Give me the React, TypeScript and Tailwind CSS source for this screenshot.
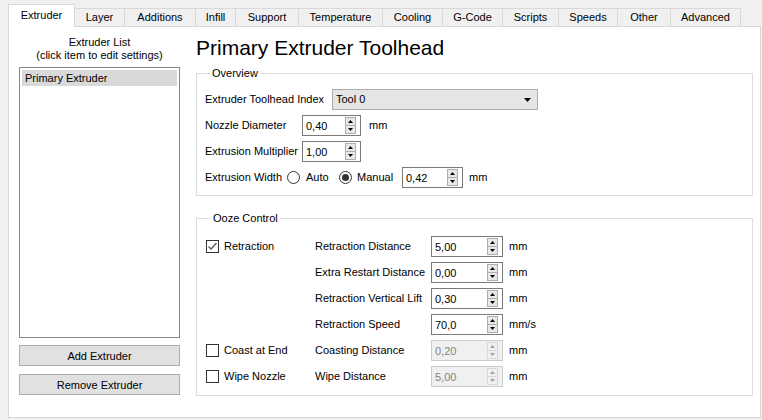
import React from "react";

const TABS = [
  { label: "Extruder", w: "w-[67px]", active: true },
  { label: "Layer", w: "w-[50px]" },
  { label: "Additions", w: "w-[71px]" },
  { label: "Infill", w: "w-[40px]" },
  { label: "Support", w: "w-[63px]" },
  { label: "Temperature", w: "w-[84px]" },
  { label: "Cooling", w: "w-[60px]" },
  { label: "G-Code", w: "w-[60px]" },
  { label: "Scripts", w: "w-[56px]" },
  { label: "Speeds", w: "w-[59px]" },
  { label: "Other", w: "w-[53px]" },
  { label: "Advanced", w: "w-[70px]" },
];

const OOZE = [
  { check: "Retraction", checked: true, label: "Retraction Distance", value: "5,00", unit: "mm" },
  { label: "Extra Restart Distance", value: "0,00", unit: "mm" },
  { label: "Retraction Vertical Lift", value: "0,30", unit: "mm" },
  { label: "Retraction Speed", value: "70,0", unit: "mm/s" },
  { check: "Coast at End", label: "Coasting Distance", value: "0,20", unit: "mm", disabled: true },
  { check: "Wipe Nozzle", label: "Wipe Distance", value: "5,00", unit: "mm", disabled: true },
];

function Tri({ down, color }: { down?: boolean; color: string }) {
  return (
    <svg width="5" height="3" viewBox="0 0 5 3">
      <path d={down ? "M0 0 L5 0 L2.5 3Z" : "M2.5 0 L5 3 L0 3Z"} fill={color} />
    </svg>
  );
}

// Qt/Win10 style spin box with the little up/down button stack
function SpinBox({ value, width, disabled }: { value: string; width: string; disabled?: boolean }) {
  return (
    <div
      className={`${width} h-[21px] flex items-stretch border ${
        disabled ? "border-[#cccccc] bg-[#f0f0f0] text-[#838383]" : "border-[#7a7a7a] bg-white"
      }`}
    >
      <span className="flex-1 pl-[3px] pt-[1px] flex items-center">{value}</span>
      <div
        className={`w-[11px] my-[1px] mr-[4px] flex flex-col border ${
          disabled ? "border-[#d9d9d9] bg-[#f0f0f0]" : "border-[#adadad] bg-[#e8e8e8]"
        }`}
      >
        <div className={`flex-1 flex items-center justify-center border-b ${disabled ? "border-[#d9d9d9]" : "border-[#adadad]"}`}>
          <Tri color={disabled ? "#a0a0a0" : "#000"} />
        </div>
        <div className="flex-1 flex items-center justify-center">
          <Tri down color={disabled ? "#a0a0a0" : "#000"} />
        </div>
      </div>
    </div>
  );
}

function CheckBox({ checked }: { checked?: boolean }) {
  return (
    <span className="w-[13px] h-[13px] border border-[#333333] bg-white flex items-center justify-center shrink-0">
      {checked && (
        <svg width="11" height="11" viewBox="0 0 11 11">
          <polyline points="1.5,5.5 4,8 9.5,2" fill="none" stroke="#555" strokeWidth="1.3" />
        </svg>
      )}
    </span>
  );
}

function Radio({ checked }: { checked?: boolean }) {
  return (
    <span className="w-[13px] h-[13px] rounded-full border border-[#333333] bg-white flex items-center justify-center shrink-0">
      {checked && <span className="w-[7px] h-[7px] rounded-full bg-[#333333]" />}
    </span>
  );
}

export default function App() {
  return (
    <div className="w-[762px] h-[420px] bg-[#f0f0f0] overflow-hidden font-['Liberation_Sans',Arial,sans-serif] text-[11px] leading-[13px] text-black">
      {/* tab strip */}
      <div className="flex items-end h-[26px] pl-[8px]">
        {TABS.map((t) =>
          t.active ? (
            <div
              key={t.label}
              className={`${t.w} h-[23px] -mb-px relative z-10 bg-white border border-b-0 border-[#d9d9d9] flex items-center justify-center pb-[1px]`}
            >
              {t.label}
            </div>
          ) : (
            <div
              key={t.label}
              className={`${t.w} h-[18px] border-t border-r border-[#d9d9d9] bg-[#f0f0f0] flex items-center justify-center`}
            >
              {t.label}
            </div>
          )
        )}
      </div>

      {/* tab pane */}
      <div className="ml-[8px] w-[753px] h-[392px] bg-white border border-[#d9d9d9] flex">
        {/* extruder list column */}
        <div className="w-[161px] ml-[10px] pt-[9px] flex flex-col">
          <div className="text-center">
            <div>Extruder List</div>
            <div>(click item to edit settings)</div>
          </div>
          <div className="mt-[5px] h-[271px] border border-[#828790] bg-white p-[2px]">
            <div className="h-[16px] bg-[#d9d9d9] pl-[3px] flex items-center">Primary Extruder</div>
          </div>
          <button className="mt-[7px] h-[21px] pt-[1px] bg-[#e1e1e1] border border-[#adadad]">Add Extruder</button>
          <button className="mt-[8px] h-[21px] pt-[1px] bg-[#e1e1e1] border border-[#adadad]">Remove Extruder</button>
        </div>

        {/* settings column */}
        <div className="w-[557px] ml-[16px] pt-[9px] flex flex-col">
          <div className="h-[24px] text-[21px] leading-[24px]">Primary Extruder Toolhead</div>

          <fieldset className="mt-[7px] border border-[#dcdcdc] pt-[9px] pb-[7px] pl-[8px]">
            <legend className="ml-[5px] px-[2px]">Overview</legend>
            <div className="flex flex-col gap-[5px]">
              <div className="flex items-center h-[21px]">
                <span className="w-[127px]">Extruder Toolhead Index</span>
                <div className="w-[206px] h-[21px] bg-[#e5e5e5] border border-[#adadad] flex items-center pl-[3px] pr-[6px]">
                  <span className="flex-1">Tool 0</span>
                  <svg width="7" height="4" viewBox="0 0 7 4">
                    <path d="M0 0 L7 0 L3.5 4Z" fill="#000" />
                  </svg>
                </div>
              </div>
              <div className="flex items-center h-[21px]">
                <span className="w-[97px]">Nozzle Diameter</span>
                <SpinBox value="0,40" width="w-[59px]" />
                <span className="ml-[8px]">mm</span>
              </div>
              <div className="flex items-center h-[21px]">
                <span className="w-[97px]">Extrusion Multiplier</span>
                <SpinBox value="1,00" width="w-[59px]" />
              </div>
              <div className="flex items-center h-[21px]">
                <span className="w-[82px]">Extrusion Width</span>
                <Radio />
                <span className="ml-[6px] w-[33px]">Auto</span>
                <Radio checked />
                <span className="ml-[5px] w-[45px]">Manual</span>
                <SpinBox value="0,42" width="w-[61px]" />
                <span className="ml-[6px]">mm</span>
              </div>
            </div>
          </fieldset>

          <fieldset className="mt-[16px] border border-[#dcdcdc] pt-[11px] pb-[8px] pl-[9px]">
            <legend className="ml-[5px] px-[2px]">Ooze Control</legend>
            <div className="flex flex-col gap-[5px]">
              {OOZE.map((r) => (
                <div key={r.label} className="flex items-center h-[21px]">
                  <div className="w-[109px] flex items-center">
                    {r.check && (
                      <>
                        <CheckBox checked={r.checked} />
                        <span className="ml-[5px]">{r.check}</span>
                      </>
                    )}
                  </div>
                  <span className="w-[116px]">{r.label}</span>
                  <SpinBox value={r.value} width="w-[72px]" disabled={r.disabled} />
                  <span className="ml-[6px]">{r.unit}</span>
                </div>
              ))}
            </div>
          </fieldset>
        </div>
      </div>
    </div>
  );
}
